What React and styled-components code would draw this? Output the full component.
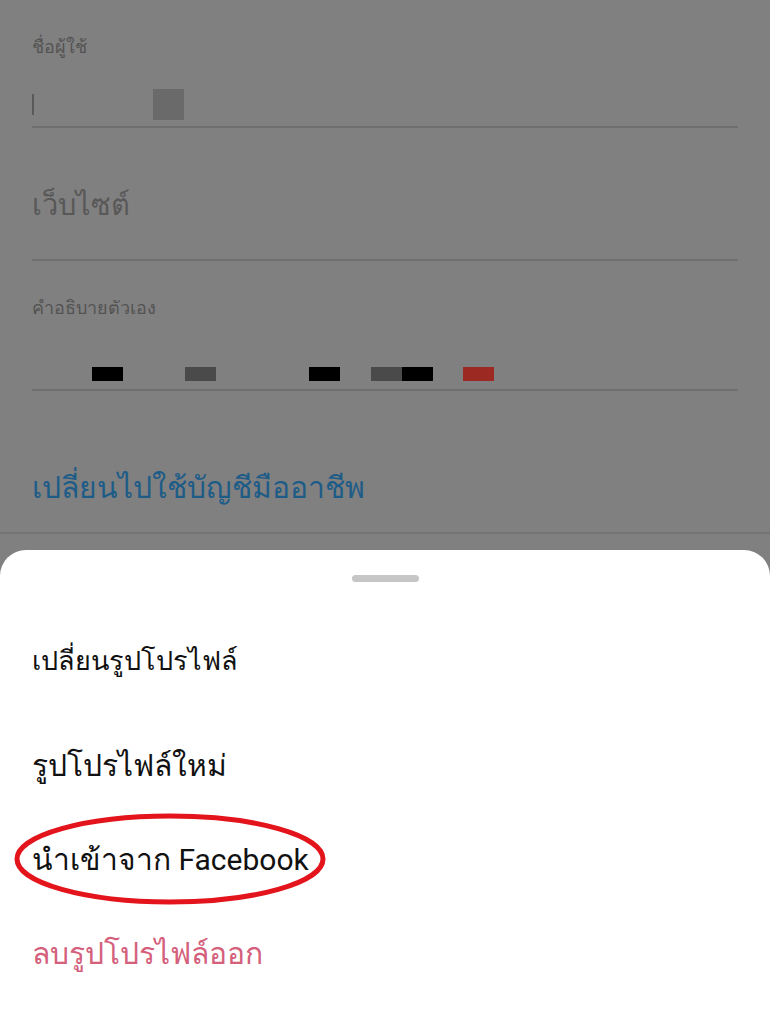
import React from 'react';
import styled, { createGlobalStyle } from 'styled-components';

const GlobalStyle = createGlobalStyle`
  html, body {
    margin: 0;
    padding: 0;
    background: #808080;
  }
  body {
    font-family: Roboto, "Noto Sans", "DejaVu Sans", sans-serif;
  }
`

const Page = styled.div`
  width: 770px;
  height: 1024px;
  display: flex;
  flex-direction: column;
  background: #808080;
  overflow: hidden;
`

const Form = styled.div`
  display: flex;
  flex-direction: column;
  padding: 0 32px;
`

const Field = styled.div`
  display: flex;
  flex-direction: column;
  padding-top: ${p => p.$top}px;
  border-bottom: 2px solid #6f6f6f;
`

const Label = styled.div`
  font-size: 18px;
  line-height: 24px;
  color: #535353;
`

const Placeholder = styled.div`
  font-size: 29px;
  line-height: 40px;
  color: #585858;
  margin-bottom: 34px;
`

const InputRow = styled.div`
  display: flex;
  align-items: center;
  height: ${p => p.$h}px;
  margin-top: ${p => p.$mt}px;
`

const Cursor = styled.span`
  width: 2px;
  height: 21px;
  background: #5a5a5a;
  margin-right: 119px;
`

const Square = styled.span`
  width: 31px;
  height: 31px;
  background: #6a6a6a;
`

const Block = styled.span`
  width: 31px;
  height: 14px;
  background: ${p => p.$c};
  margin-left: ${p => p.$ml}px;
`

const LinkSection = styled.div`
  padding: 75px 32px 22px;
  border-bottom: 2px solid #747474;
  margin-bottom: 16px;
`

const LinkText = styled.div`
  font-size: 30px;
  line-height: 44px;
  color: #1e5c88;
`

const Sheet = styled.div`
  flex: 1;
  background: #ffffff;
  border-radius: 26px 26px 0 0;
  display: flex;
  flex-direction: column;
  align-items: stretch;
  padding-top: 25px;
`

const Handle = styled.div`
  align-self: center;
  width: 67px;
  height: 7px;
  border-radius: 4px;
  background: #c6c6c6;
`

const Title = styled.div`
  margin-top: 31px;
  height: 94px;
  display: flex;
  align-items: center;
  padding: 0 32px;
  font-size: 27px;
  color: #111111;
`

const Options = styled.div`
  margin-top: 11px;
  display: flex;
  flex-direction: column;
`

const Option = styled.div`
  position: relative;
  height: 94px;
  display: flex;
  align-items: center;
  padding: 0 32px;
  font-size: 30px;
  color: ${p => (p.$danger ? '#d4607c' : '#111111')};
`

const Circle = styled.svg`
  position: absolute;
  left: 13px;
  top: 0;
  pointer-events: none;
`

export default function App() {
  return (
    <Page>
      <GlobalStyle />
      <Form>
        <Field $top={35}>
          <Label>ชื่อผู้ใช้</Label>
          <InputRow $h={44} $mt={23}>
            <Cursor />
            <Square />
          </InputRow>
        </Field>
        <Field $top={57}>
          <Placeholder>เว็บไซต์</Placeholder>
        </Field>
        <Field $top={35}>
          <Label>คำอธิบายตัวเอง</Label>
          <InputRow $h={30} $mt={39}>
            <Block $c="#000000" $ml={60} />
            <Block $c="#4a4a4a" $ml={62} />
            <Block $c="#000000" $ml={93} />
            <Block $c="#4a4a4a" $ml={31} />
            <Block $c="#000000" $ml={0} />
            <Block $c="#9c2a22" $ml={30} />
          </InputRow>
        </Field>
      </Form>
      <LinkSection>
        <LinkText>เปลี่ยนไปใช้บัญชีมืออาชีพ</LinkText>
      </LinkSection>
      <Sheet>
        <Handle />
        <Title>เปลี่ยนรูปโปรไฟล์</Title>
        <Options>
          <Option>รูปโปรไฟล์ใหม่</Option>
          <Option>
            นำเข้าจาก Facebook
            <Circle width="318" height="96" viewBox="0 0 318 96">
              <ellipse cx="157" cy="47" rx="153" ry="43" fill="none" stroke="#e3141c" strokeWidth="5" />
            </Circle>
          </Option>
          <Option $danger>ลบรูปโปรไฟล์ออก</Option>
        </Options>
      </Sheet>
    </Page>
  );
}
